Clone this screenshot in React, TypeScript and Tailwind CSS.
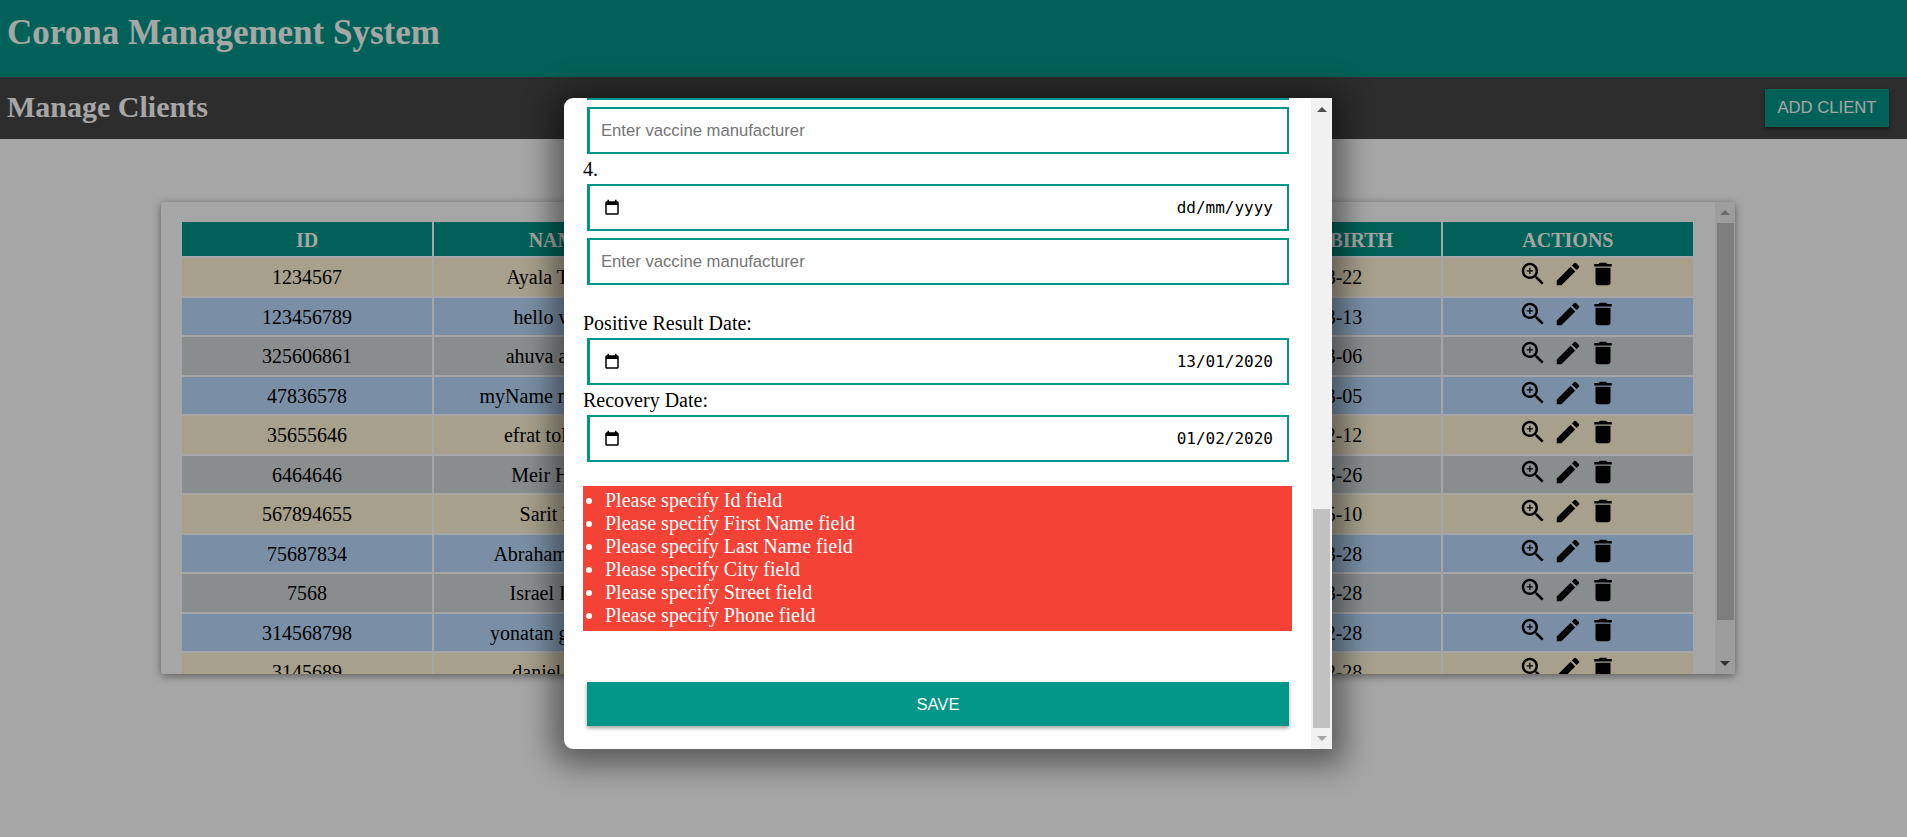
import React from "react";

const rows = [
  ["1234567", "Ayala Tzadik", "1990-03-22", "bg-[#fff6d8]", "h-[38px]"],
  ["123456789", "hello world", "1990-03-13", "bg-[#bcdcfe]", "h-[37px]"],
  ["325606861", "ahuva aharon", "1990-03-06", "bg-[#d3d9db]", "h-[38px]"],
  ["47836578", "myName newName", "1990-03-05", "bg-[#bcdcfe]", "h-[37px]"],
  ["35655646", "efrat toledano", "1990-02-12", "bg-[#fff6d8]", "h-[38px]"],
  ["6464646", "Meir Hadad", "1990-05-26", "bg-[#d3d9db]", "h-[37px]"],
  ["567894655", "Sarit Levi", "1990-05-10", "bg-[#fff6d8]", "h-[38px]"],
  ["75687834", "Abraham Cohen", "1990-03-28", "bg-[#bcdcfe]", "h-[37px]"],
  ["7568", "Israel Israeli", "1990-03-28", "bg-[#d3d9db]", "h-[38px]"],
  ["314568798", "yonatan goldman", "1990-02-28", "bg-[#bcdcfe]", "h-[37px]"],
  ["3145689", "daniel levin", "1990-02-28", "bg-[#fff6d8]", "h-[38px]"],
];

const Actions = () => (
  <div className="flex justify-center gap-[5px] pt-[1px]">
    <svg viewBox="0 0 24 24" className="w-[30px] h-[30px]" fill="currentColor"><path d="M15.5 14h-.79l-.28-.27C15.41 12.59 16 11.11 16 9.5 16 5.91 13.09 3 9.5 3S3 5.91 3 9.5 5.91 16 9.5 16c1.61 0 3.09-.59 4.23-1.57l.27.28v.79l5 4.99L20.49 19l-4.99-5zm-6 0C7.01 14 5 11.99 5 9.5S7.01 5 9.5 5 14 7.01 14 9.5 11.99 14 9.5 14z"/><path d="M12 10h-2v2H9v-2H7V9h2V7h1v2h2v1z"/></svg>
    <svg viewBox="0 0 24 24" className="w-[30px] h-[30px]" fill="currentColor"><path d="M3 17.25V21h3.75L17.81 9.94l-3.75-3.75L3 17.25zM20.71 7.04c.39-.39.39-1.02 0-1.41l-2.34-2.34a.9959.9959 0 0 0-1.41 0l-1.83 1.83 3.75 3.75 1.83-1.83z"/></svg>
    <svg viewBox="0 0 24 24" className="w-[30px] h-[30px]" fill="currentColor"><path d="M6 19c0 1.1.9 2 2 2h8c1.1 0 2-.9 2-2V7H6v12zM19 4h-3.5l-1-1h-5l-1 1H5v2h14V4z"/></svg>
  </div>
);

const inputCls = "block w-[702px] h-[47px] ml-[23px] border-2 border-l-[3px] border-solid border-[#009688] bg-white pl-[11px] pr-[12px] text-[16.67px] font-['Liberation_Sans',sans-serif] placeholder:text-[#757575] outline-none";

const DateField = ({ value }: { value: string }) => (
  <div className="w-[702px] h-[47px] ml-[23px] border-2 border-l-[3px] border-solid border-[#009688] bg-white pl-[13px] pr-[14px] flex items-center justify-between text-[16px] font-['DejaVu_Sans_Mono',monospace]">
    <svg viewBox="0 0 24 24" className="w-[18px] h-[18px]" fill="currentColor"><path d="M19 3h-1V1h-2v2H8V1H6v2H5c-1.11 0-1.99.9-1.99 2L3 19c0 1.1.89 2 2 2h14c1.1 0 2-.9 2-2V5c0-1.1-.9-2-2-2zm0 16H5V8h14v11z"/></svg>
    <span>{value}</span>
  </div>
);

const Arrow = ({ up, cls }: { up?: boolean; cls: string }) => (
  <svg viewBox="0 0 10 5" className="w-[10px] h-[5px]"><path className={cls} d={up ? "M5 0L10 5H0z" : "M0 0H10L5 5z"} /></svg>
);

export default function App() {
  return (
    <div className="relative w-[1907px] h-[837px] overflow-hidden bg-white font-['Liberation_Serif',serif] text-black">
      <header className="h-[77px] bg-[#009688] px-[7px] pt-[13px]">
        <h1 className="text-[35px] leading-[40px] font-bold text-white">Corona Management System</h1>
      </header>
      <div className="h-[62px] bg-[#454545] pl-[7px] pr-[18px] flex items-center justify-between">
        <h2 className="text-[30px] leading-[32px] font-bold text-white -mt-[3px]">Manage Clients</h2>
        <button className="w-[124px] h-[38px] mt-[-1px] bg-[#009688] text-white text-[16.67px] font-['Liberation_Sans',sans-serif] shadow-[0_2px_4px_rgba(0,0,0,0.4)]">ADD CLIENT</button>
      </div>
      <main className="ml-[161px] mt-[63px] w-[1574px] h-[472px] flex bg-white shadow-[0_2px_8px_rgba(0,0,0,0.45)] rounded-[3px]">
        <div className="flex-1 overflow-hidden pl-[19px] pt-[18px]">
          <table className="w-[1515px] table-fixed border-separate border-spacing-[2px] text-[20px] leading-[24px] text-center">
            <thead>
              <tr className="bg-[#009688] text-white font-bold h-[34px]">
                {["ID", "NAME", "", "", "DATE OF BIRTH", "ACTIONS"].map((h, i) => (
                  <th key={i} className="p-0 pt-[2px] font-bold">{h}</th>
                ))}
              </tr>
            </thead>
            <tbody>
              {rows.map((r) => (
                <tr key={r[0]} className={`${r[3]} ${r[4]}`}>
                  <td className="p-0">{r[0]}</td>
                  <td className="p-0">{r[1]}</td>
                  <td className="p-0"></td>
                  <td className="p-0"></td>
                  <td className="p-0">{r[2]}</td>
                  <td className="p-0 align-top"><Actions /></td>
                </tr>
              ))}
            </tbody>
          </table>
        </div>
        <div className="w-[20px] bg-[#f1f1f1] flex flex-col items-center">
          <div className="h-[21px] flex items-center justify-center"><Arrow up cls="fill-[#a3a3a3]" /></div>
          <div className="w-[17px] h-[397px] bg-[#c1c1c1]"></div>
          <div className="flex-1 flex items-end justify-center pb-[8px]"><Arrow cls="fill-[#505050]" /></div>
        </div>
      </main>
      <div className="absolute inset-0 bg-black/35"></div>
      <div className="absolute left-[564px] top-[98px] w-[768px] h-[651px] flex bg-white rounded-l-[9px] shadow-[0_4px_30px_12px_rgba(0,0,0,0.45)] text-[20px] leading-[23px]">
        <div className="flex-1 overflow-hidden">
          <div className="w-[702px] h-[2px] ml-[23px] bg-[#009688]"></div>
          <input className={`${inputCls} mt-[7px]`} placeholder="Enter vaccine manufacturer" />
          <div className="ml-[19px] mt-[4px] mb-[3px] h-[23px]">4.</div>
          <DateField value="dd/mm/yyyy" />
          <input className={`${inputCls} mt-[7px]`} placeholder="Enter vaccine manufacturer" />
          <div className="ml-[19px] mt-[27px] mb-[3px] h-[23px]">Positive Result Date:</div>
          <DateField value="13/01/2020" />
          <div className="ml-[19px] mt-[4px] mb-[3px] h-[23px]">Recovery Date:</div>
          <DateField value="01/02/2020" />
          <ul className="mt-[24px] ml-[19px] w-[709px] h-[145px] bg-[#f44336] text-white list-disc pl-[22px] pt-[3px]">
            <li>Please specify Id field</li>
            <li>Please specify First Name field</li>
            <li>Please specify Last Name field</li>
            <li>Please specify City field</li>
            <li>Please specify Street field</li>
            <li>Please specify Phone field</li>
          </ul>
          <button className="block mt-[51px] ml-[23px] w-[702px] h-[44px] bg-[#009688] text-white text-[16.67px] font-['Liberation_Sans',sans-serif] shadow-[0_2px_4px_rgba(0,0,0,0.4)]">SAVE</button>
        </div>
        <div className="w-[21px] bg-[#f1f1f1] flex flex-col items-center">
          <div className="h-[23px] flex items-center justify-center"><Arrow up cls="fill-[#505050]" /></div>
          <div className="h-[388px]"></div>
          <div className="w-[17px] h-[219px] bg-[#c1c1c1]"></div>
          <div className="flex-1 flex items-center justify-center"><Arrow cls="fill-[#a3a3a3]" /></div>
        </div>
      </div>
    </div>
  );
}
